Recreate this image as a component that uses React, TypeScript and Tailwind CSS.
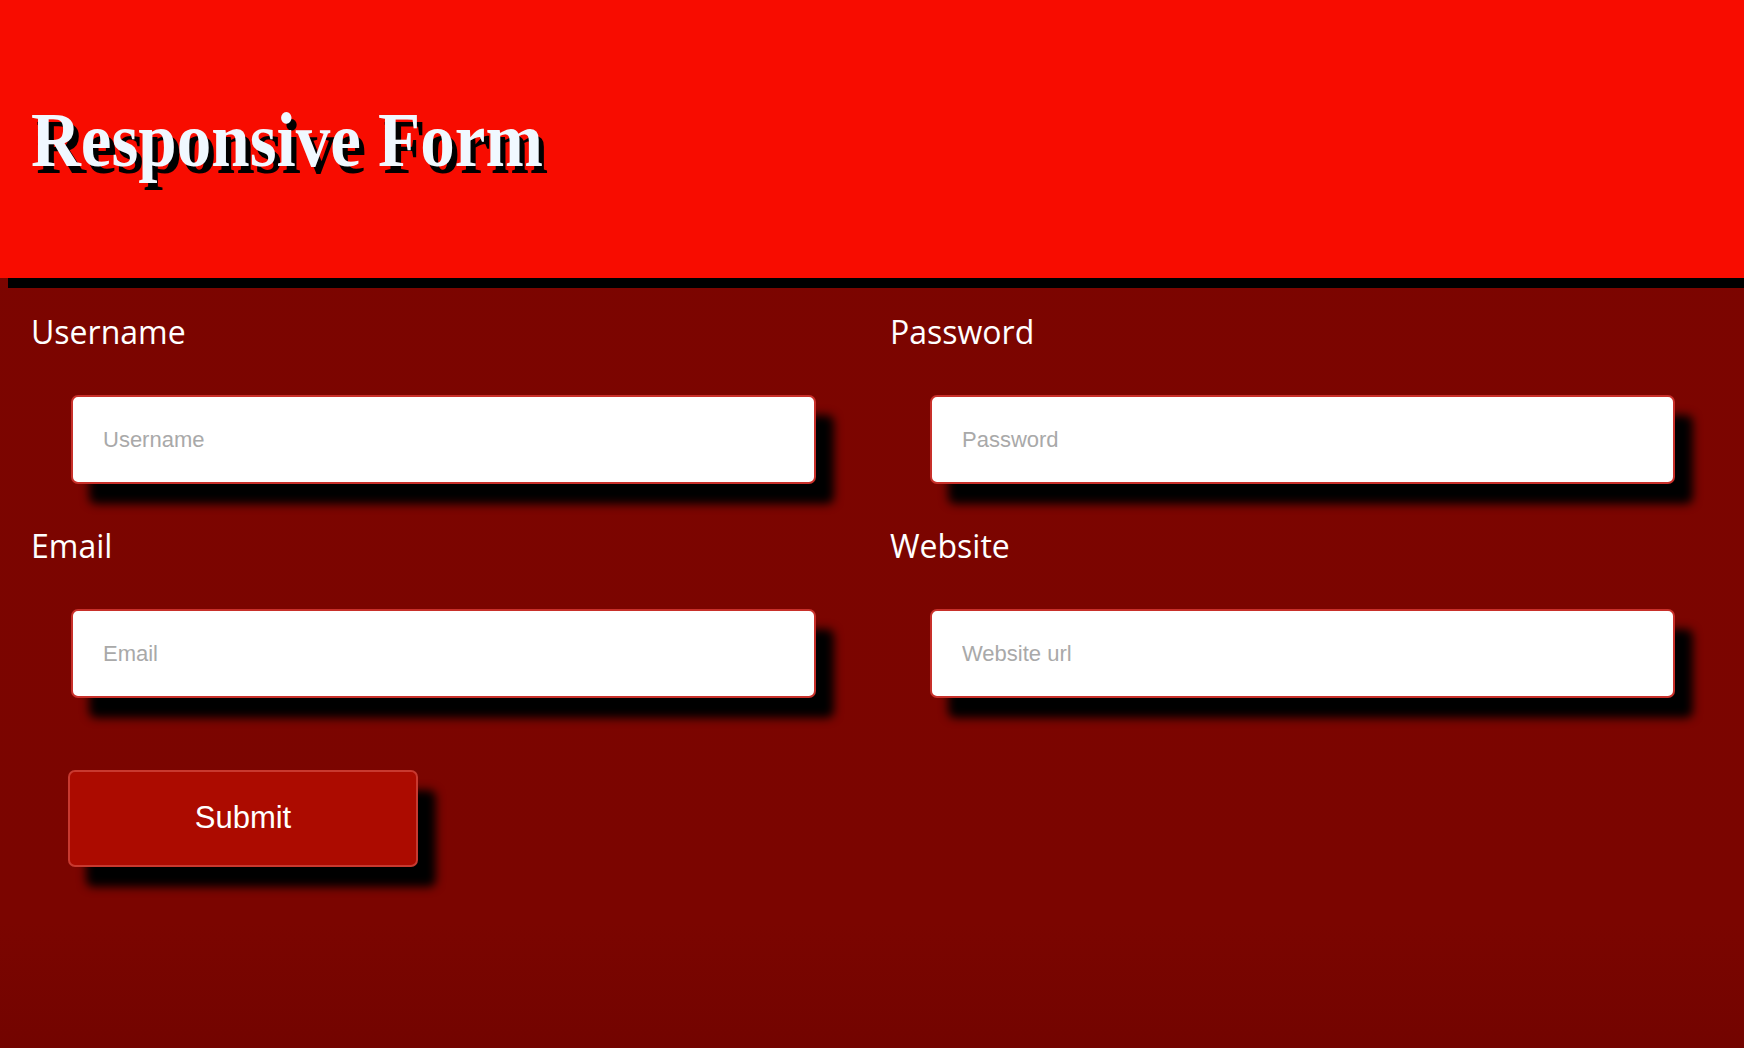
import React from "react";

function Field({ label, placeholder, type = "text" }: { label: string; placeholder: string; type?: string }) {
  return (
    <div className="flex flex-col">
      <label className="block text-[32px] leading-[40px] text-white font-['Open_Sans',sans-serif]">{label}</label>
      <input
        type={type}
        placeholder={placeholder}
        className="mt-[43px] ml-10 w-[745px] h-[89px] rounded-[7px] border-2 border-[#c8302a] bg-white pl-[30px] text-[22px] font-['Liberation_Sans',Arial,sans-serif] text-[#333] placeholder:text-[#a9a9a9] shadow-[18px_20px_10px_#000] outline-none"
      />
    </div>
  );
}

export default function App() {
  return (
    <div className="min-h-screen w-full bg-[linear-gradient(to_bottom,#7c0500_0%,#7b0500_88%,#730400_100%)] overflow-hidden">
      <header className="relative z-10 h-[278px] bg-[#f80c00] shadow-[8px_10px_0_#000] flex items-center pl-[31px]">
        <h1 className="origin-left scale-x-[0.885] text-[78px] leading-none font-bold text-[#f0f8ff] font-['Liberation_Serif','Times_New_Roman',serif] [text-shadow:6px_7px_0_#000] whitespace-nowrap mt-[2px]">
          Responsive Form
        </h1>
      </header>
      <main className="pl-[31px] pt-[34px]">
        <div className="grid grid-cols-[859px_1fr] gap-y-[42px]">
          <Field label="Username" placeholder="Username" />
          <Field label="Password" placeholder="Password" type="password" />
          <Field label="Email" placeholder="Email" type="email" />
          <Field label="Website" placeholder="Website url" />
        </div>
        <button className="mt-[72px] ml-[37px] w-[350px] h-[97px] rounded-[7px] border-2 border-[#c8392f] bg-[#ac0b00] text-white text-[31px] font-['Liberation_Sans',Arial,sans-serif] shadow-[18px_20px_10px_#000]">
          Submit
        </button>
      </main>
    </div>
  );
}
